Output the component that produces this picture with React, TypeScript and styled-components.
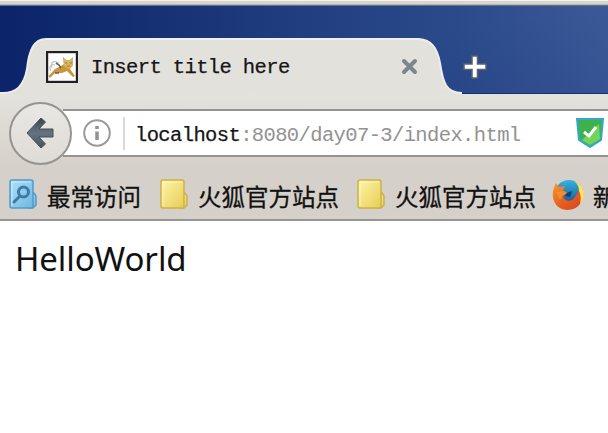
import React from "react";
import styled, { createGlobalStyle } from "styled-components";

const GlobalStyle = createGlobalStyle`
  * { box-sizing: border-box; }
  body { margin: 0; background: #fff; overflow: hidden; }
  svg { display: block; flex: none; }
`;

const Window = styled.div`
  width: 608px;
  height: 433px;
  display: flex;
  flex-direction: column;
  overflow: hidden;
  background: #fff;
`;

const FrameEdge = styled.div`
  height: 6px;
  flex: none;
  background: linear-gradient(#f3f3f1 0 1px, #d8d5cd 1px 4px, #b5b5b1 4px 5px, #64718f 5px);
`;

const TabStrip = styled.div`
  height: 88px;
  flex: none;
  display: flex;
  align-items: flex-end;
  background: linear-gradient(168deg, transparent 55%, rgba(12, 42, 115, 0.16)),
    linear-gradient(90deg, #0b246a 0, #122c70 18%, #213f80 50%, #2b4a8a 75%, #3d5a98 100%);
  box-shadow: inset 0 -1px #133276;
`;

const Tab = styled.div`
  height: 56px;
  display: flex;
`;

const TabBody = styled.div`
  width: 373px;
  display: flex;
  align-items: center;
  background: #e3e1dc;
  border-top: 2px solid #f1efeb;
`;

const mono = `font-family: "Liberation Mono", monospace; white-space: pre;`;

const TabTitle = styled.span`
  ${mono}
  margin-left: 13px;
  padding-top: 2px;
  width: 310px;
  flex: none;
  font-size: 20.5px;
  letter-spacing: -0.62px;
  line-height: 28px;
  color: #151515;
  -webkit-text-stroke: 0.25px #151515;
`;

const NewTab = styled.div`
  margin: 0 0 15px 1px;
`;

const NavBar = styled.div`
  height: 76px;
  flex: none;
  display: flex;
  align-items: center;
  padding: 2px 0 0 9px;
  background: linear-gradient(#e4e2dd, #d5d0c9);
`;

const BackButton = styled.button`
  width: 63px;
  height: 63px;
  flex: none;
  z-index: 1;
  padding: 0 0 0 1px;
  display: flex;
  align-items: center;
  justify-content: center;
  border: 2px solid #969492;
  border-radius: 50%;
  background: linear-gradient(#e9e7e3, #dfdcd6);
`;

const AddressBar = styled.div`
  flex: 1;
  height: 48px;
  margin-left: -9px;
  padding-left: 20px;
  display: flex;
  align-items: center;
  background: #fff;
  border-top: 2px solid #949390;
  border-bottom: 2px solid #949390;
`;

const Separator = styled.div`
  width: 2px;
  height: 33px;
  margin: 0 10px 0 12px;
  background: #d9d9d9;
`;

const Url = styled.span`
  ${mono}
  width: 441px;
  flex: none;
  font-size: 20.5px;
  letter-spacing: -0.62px;
  line-height: 30px;
  padding-top: 5px;
  color: #929292;
`;

const Host = styled.span`
  color: #151515;
  -webkit-text-stroke: 0.25px #151515;
`;

const BookmarksBar = styled.div`
  height: 51px;
  flex: none;
  display: flex;
  align-items: center;
  padding-left: 8px;
  background: #d5d0c9;
  border-bottom: 2px solid #979694;
`;

const Bookmark = styled.div<{ $width: number }>`
  width: ${(p) => p.$width}px;
  flex: none;
  display: flex;
  align-items: center;
  gap: 9px;
  white-space: nowrap;
  font: 23.5px/30px "Noto Sans CJK SC", sans-serif;
  color: #111;
  -webkit-text-stroke: 0.3px #111;
`;

const BookmarkLabel = styled.span`
  padding-top: 3px;
`;

const Page = styled.main`
  flex: 1;
  padding: 16px 0 0 15px;
  font: 33px/44px "Noto Sans", sans-serif;
  letter-spacing: -0.1px;
  color: #111;
`;

const TabLeftEdge = () => (
  <svg width="46" height="56" viewBox="0 0 46 56">
    <path d="M0 56V55C17 56 24 47 27 31C29 12 34 1 46 1V56Z" fill="#e3e1dc" />
    <path d="M0 55C17 56 24 47 27 31C29 12 34 1 46 1" fill="none" stroke="#eeece9" strokeWidth="2" />
  </svg>
);

const TabRightEdge = () => (
  <svg width="43" height="56" viewBox="0 0 43 56">
    <path d="M0 56V1C12 2 18 9 21 25C24 45 27 55 43 55V56Z" fill="#e3e1dc" />
    <path d="M0 1C12 2 18 9 21 25C24 45 27 55 43 55" fill="none" stroke="#eeece9" strokeWidth="2" />
  </svg>
);

const TomcatIcon = () => (
  <svg width="32" height="32" viewBox="0 0 32 32">
    <rect x="1" y="1" width="30" height="30" fill="#fff" stroke="#202020" strokeWidth="2.4" />
    <path d="M6 17C4 11 8 9 13 12M5 20C2 15 6 13 9 14" fill="none" stroke="#c4c4c4" strokeWidth="1.3" />
    <path d="M2.500 25L9 18L15 15L18 13L17 6L20 9H24L27 6V14L24 18L29 25L27 26L21 20L16 22L9 22L4 27Z" fill="#c9963b" />
    <path d="M17 6L20 9H24L27 6V14L23 18L18 15Z" fill="#d9b361" />
    <path d="M10 12L13 14L15 17M9 22L13 22" fill="none" stroke="#65605a" strokeWidth="1.6" />
    <path d="M19 12H21M24 12H26M21 15H24" stroke="#9b7b35" />
  </svg>
);

const CloseIcon = () => (
  <svg width="18" height="18" viewBox="0 0 18 18">
    <path d="M3 3L14 14M14 3L3 14" stroke="#7d858c" strokeWidth="4" strokeLinecap="round" />
  </svg>
);

const PlusIcon = () => (
  <svg width="24" height="24" viewBox="0 0 24 24">
    <path d="M9 1H14.500V9H23V14.500H14.500V23H9V14.500H1V9H9Z" fill="#fff" stroke="#59616d" strokeWidth="1.5" />
  </svg>
);

const BackIcon = () => (
  <svg width="30" height="32" viewBox="0 0 30 32">
    <defs>
      <linearGradient id="arrow" x2="0" y2="1">
        <stop stopColor="#37434e" />
        <stop offset=".5" stopColor="#667482" />
        <stop offset="1" stopColor="#46525e" />
      </linearGradient>
    </defs>
    <path d="M1 16L15 1L19.500 5L13 12H27V20H13L19.500 27L15 31Z" fill="url(#arrow)" stroke="#44505b" strokeLinejoin="round" />
  </svg>
);

const InfoIcon = () => (
  <svg width="28" height="28" viewBox="0 0 28 28">
    <circle cx="14" cy="14" r="12.800" fill="none" stroke="#9a9a9a" strokeWidth="2" />
    <path d="M14 12.500V21M14 7V10" stroke="#929292" strokeWidth="3.5" />
  </svg>
);

const ShieldIcon = () => (
  <svg width="28" height="30" viewBox="0 0 28 30">
    <path d="M1 1H27L25 22L14 29L3 22Z" fill="#3eb14d" stroke="#32a8cf" strokeWidth="2" />
    <path d="M23 6L24 21L14 27L6 22Z" fill="#73d45b" />
    <path d="M8 14L13 18L20 9" fill="none" stroke="#fff" strokeWidth="3" />
  </svg>
);

const FolderIcon = ({ search = false }: { search?: boolean }) => {
  const id = search ? "folder-blue" : "folder-yellow";
  const line = search ? "#529bc7" : "#cdb146";
  return (
    <svg width="30" height="32" viewBox="0 0 30 32">
      <defs>
        <linearGradient id={id} x2="1" y2="1">
          <stop stopColor={search ? "#aee0fa" : "#fff5a8"} />
          <stop offset="1" stopColor={search ? "#6fb7e2" : "#e6cd55"} />
        </linearGradient>
      </defs>
      <path d="M21 14H26L28 17V26L25 29H21Z" fill={`url(#${id})`} stroke={line} strokeWidth="1.5" />
      <rect x="2" y="1" width="23" height="28" rx="2" fill={`url(#${id})`} stroke={line} strokeWidth="1.5" />
      <path d="M4 27V3H23" fill="none" stroke="#fff" strokeOpacity=".5" />
      {search && (
        <g fill="none" stroke="#3d7ba4" strokeWidth="3" strokeLinecap="round">
          <circle cx="15.500" cy="13" r="5" />
          <path d="M12 17L6 23" />
        </g>
      )}
    </svg>
  );
};

const FirefoxIcon = () => (
  <svg width="32" height="32" viewBox="0 0 32 32">
    <defs>
      <linearGradient id="globe" x2="0" y2="1">
        <stop stopColor="#35b2e5" />
        <stop offset="1" stopColor="#154579" />
      </linearGradient>
      <linearGradient id="fox" x2="1" y2="1">
        <stop stopColor="#f59a35" />
        <stop offset=".55" stopColor="#e85b20" />
        <stop offset="1" stopColor="#d54420" />
      </linearGradient>
    </defs>
    <circle cx="17" cy="15" r="14" fill="url(#globe)" />
    <path d="M26 4C32 9 33 18 28 25C21 34 7 32 3 24C-1 17 1 10 4 4L7 8L13 7L11 12L15 14L11 17C12 23 20 23 23 18C27 13 28 9 26 4Z" fill="url(#fox)" />
    <path d="M22 2C33 6 34 18 28 25C29 20 29 16 27 12C27 8 26 5 22 2Z" fill="#ffe35b" />
    <path d="M4 13L12 12L15 14L10 17L8 21Z" fill="#f58c2d" />
    <path d="M15 14L20 12L18 18L13 17Z" fill="#153d70" />
  </svg>
);

export default function App() {
  return (
    <Window>
      <GlobalStyle />
      <FrameEdge />
      <TabStrip>
        <Tab>
          <TabLeftEdge />
          <TabBody>
            <TomcatIcon />
            <TabTitle>Insert title here</TabTitle>
            <CloseIcon />
          </TabBody>
          <TabRightEdge />
        </Tab>
        <NewTab><PlusIcon /></NewTab>
      </TabStrip>
      <NavBar>
        <BackButton aria-label="Back"><BackIcon /></BackButton>
        <AddressBar>
          <InfoIcon />
          <Separator />
          <Url><Host>localhost</Host>:8080/day07-3/index.html</Url>
          <ShieldIcon />
        </AddressBar>
      </NavBar>
      <BookmarksBar>
        <Bookmark $width={151}><FolderIcon search /><BookmarkLabel>最常访问</BookmarkLabel></Bookmark>
        <Bookmark $width={197}><FolderIcon /><BookmarkLabel>火狐官方站点</BookmarkLabel></Bookmark>
        <Bookmark $width={196}><FolderIcon /><BookmarkLabel>火狐官方站点</BookmarkLabel></Bookmark>
        <Bookmark $width={80}><FirefoxIcon /><BookmarkLabel>新</BookmarkLabel></Bookmark>
      </BookmarksBar>
      <Page>HelloWorld</Page>
    </Window>
  );
}
